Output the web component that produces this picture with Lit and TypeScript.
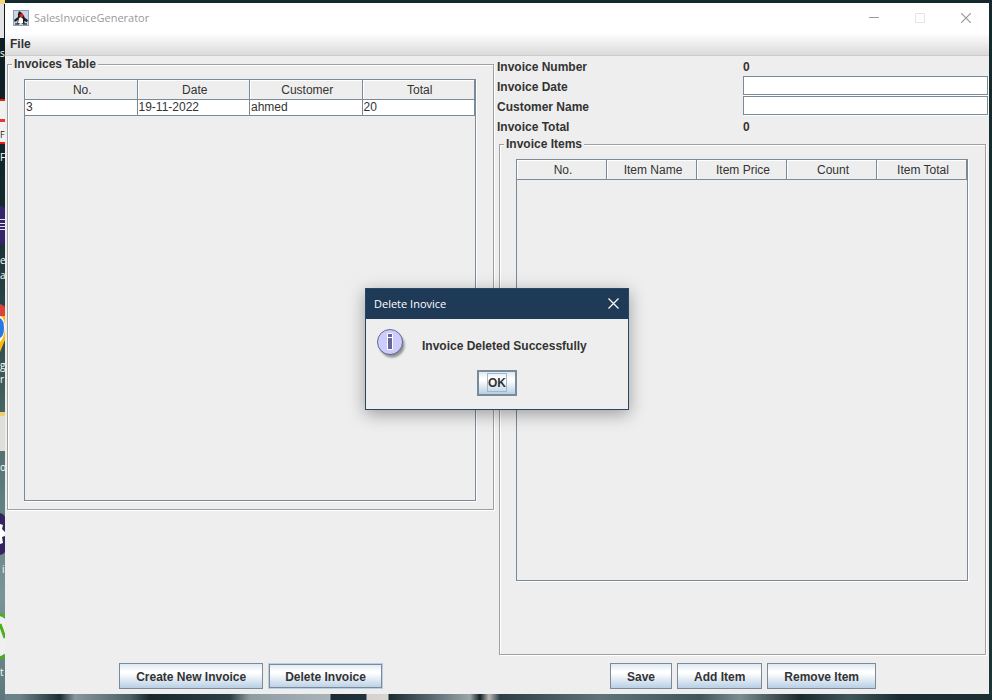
import { LitElement, html, css } from "lit";
import { customElement, property } from "lit/decorators.js";

@customElement("data-grid")
class DataGrid extends LitElement {
  @property({ attribute: false }) columns: string[] = [];
  @property({ attribute: false }) rows: string[][] = [];

  static styles = css`
    :host {
      display: block;
      box-sizing: border-box;
      height: 422px;
      border: 1px solid #7a8a99;
      box-shadow: 1px 1px 0 #fff;
    }
    .table {
      width: 100%;
      table-layout: fixed;
      border-collapse: separate;
      border-spacing: 0;
      font-size: 12px;
      font-weight: 400;
      color: #333;
    }
    th,
    td {
      box-sizing: border-box;
      padding: 0;
      border-right: 1px solid #7a8a99;
      border-bottom: 1px solid #7a8a99;
      overflow: hidden;
      white-space: nowrap;
    }
    th {
      height: 20px;
      padding: 2px 0 0 3px;
      line-height: 17px;
      font-weight: 400;
      text-align: center;
      background: #eee;
      box-shadow: inset 1px 1px 0 #fff;
    }
    td {
      height: 16px;
      padding-left: 1px;
      line-height: 15px;
      text-align: left;
      background: #fff;
    }
  `;

  render() {
    return html`
      <table class="table">
        <thead>
          <tr>${this.columns.map((c) => html`<th scope="col">${c}</th>`)}</tr>
        </thead>
        <tbody>
          ${this.rows.map((r) => html`<tr>${r.map((v) => html`<td>${v}</td>`)}</tr>`)}
        </tbody>
      </table>
    `;
  }
}

@customElement("app-root")
class AppRoot extends LitElement {
  static styles = css`
    :host {
      display: block;
      font: bold 12px/16px "Liberation Sans", Arial, sans-serif;
      color: #333;
    }
    * {
      box-sizing: border-box;
    }
    .desktop {
      position: relative;
      display: flex;
      min-height: 100vh;
      padding: 3px 3px 6px 5px;
      overflow: hidden;
      background:
        linear-gradient(90deg, #6a8288 0 20px, #1d2f33 60px, #87979b 75px, #4d6166 130px, #18282d 150px,
          #2c4046 230px, #8e9ca1 250px, #aab3b8 330px, #1b2b31 331px, #22333a 366px, #d5d2cd 367px,
          #d9d6d2 388px, #1b2b30 389px, #56676d 430px, #9ba5a8 470px, #132226 480px, #b9b9b5 489px,
          #2d3f45 500px, #5f7378 600px, #41555b 700px, #7c8d92 740px, #1a2a2e 800px, #41565b 850px,
          #1a2c2f 900px, #1c3033 100%) bottom / 100% 6px no-repeat,
        linear-gradient(#14292b, #1c3437);
    }
    .shortcuts {
      position: absolute;
      left: 0;
      top: 0;
      width: 5px;
      height: 700px;
    }
    .window {
      position: relative;
      flex: 1;
      display: flex;
      flex-direction: column;
      background: #eee;
    }
    .titlebar {
      display: flex;
      align-items: center;
      height: 30px;
      padding-left: 8px;
      background: #fff;
    }
    .logo {
      width: 16px;
      height: 16px;
      margin-right: 5px;
    }
    .title {
      flex: 1;
      margin: 0;
      font: 400 11px/16px "Open Sans", "Noto Sans", sans-serif;
      color: #999;
    }
    .control {
      display: grid;
      place-items: center;
      width: 46px;
      height: 30px;
      padding: 0;
      border: 0;
      background: none;
      color: #999;
    }
    .control[disabled] {
      color: #e3e3e3;
    }
    .menubar {
      display: flex;
      height: 23px;
      border-bottom: 1px solid #ccc;
      background: linear-gradient(#fff, #dadada);
    }
    .menu {
      padding: 0 5px;
      border: 0;
      background: none;
      font: inherit;
      color: inherit;
    }
    .content {
      flex: 1;
      display: grid;
      grid-template-columns: 1fr 1fr;
    }
    .side {
      display: flex;
      flex-direction: column;
      min-width: 0;
    }
    .group {
      min-width: 0;
      margin: 0 3px 0 2px;
      padding: 7px 17px 8px 16px;
      border: 1px solid #a0a0a0;
      box-shadow: 1px 1px 0 #fff, inset 1px 1px 0 #fff;
    }
    .group.items {
      flex: 1;
    }
    .legend {
      margin-left: -12px;
      padding: 1px 2px 0;
      line-height: 15px;
      background: #eee;
    }
    .fields {
      display: grid;
      grid-template-columns: 1fr 1fr;
      grid-auto-rows: 20px;
      line-height: 22px;
    }
    .field {
      width: calc(100% - 1px);
      height: 19px;
      padding: 0 2px;
      border: 1px solid #7a8a99;
      border-radius: 0;
      outline: 0;
      background: #fff;
      box-shadow: 1px 1px 0 #fff;
      font: 400 12px "Liberation Sans", Arial, sans-serif;
      color: #333;
    }
    .actions {
      display: flex;
      justify-content: center;
      gap: 5px;
      margin-top: auto;
      padding: 8px 0 5px;
    }
    .button {
      height: 26px;
      padding: 2px 16px 0;
      border: 1px solid #7a8a99;
      border-radius: 0;
      outline: 0;
      background: linear-gradient(#dde8f3, #fff 30%, #fff 38%, #b8cfe5);
      font: inherit;
      color: #333;
      white-space: nowrap;
    }
    .button.hot {
      border-color: #b8cfe5;
      box-shadow: inset 0 0 0 1px #7a8a99;
    }
    .button.focused {
      padding: 0 8px;
      border-width: 2px;
    }
    .focus {
      display: block;
      padding-top: 1px;
      border: 1px solid #a3b8cc;
      line-height: 16px;
    }
    .overlay {
      position: absolute;
      inset: 0;
      display: grid;
      place-items: center;
    }
    .dialog {
      position: static;
      width: 264px;
      margin: 0;
      padding: 0;
      border: 1px solid #274766;
      background: #eee;
      color: inherit;
      box-shadow: 0 4px 16px rgba(0, 0, 0, 0.35);
    }
    .dialog-head {
      display: flex;
      align-items: center;
      height: 30px;
      padding-left: 8px;
      background: #1f3a57;
    }
    .dialog-head .title,
    .dialog-head .control {
      color: #fff;
    }
    .dialog-head .control {
      width: 30px;
    }
    .message {
      display: flex;
      gap: 14px;
      padding: 9px 10px 0;
    }
    .message p {
      margin: 0;
      padding-top: 10px;
    }
    .dialog-actions {
      display: flex;
      justify-content: center;
      padding: 10px 0 13px;
    }
  `;

  render() {
    return html`
      <div class="desktop">
        ${this.renderShortcuts()}
        <main class="window">
          <header class="titlebar">
            ${this.renderLogo()}
            <h1 class="title">SalesInvoiceGenerator</h1>
            <button class="control" aria-label="Minimize">
              <svg width="10" height="10"><path d="M0 4.500H10" stroke="currentColor" /></svg>
            </button>
            <button class="control" aria-label="Maximize" disabled>
              <svg width="10" height="10"><path d="M.5 .5H9.5V9.5H.5Z" fill="none" stroke="currentColor" /></svg>
            </button>
            <button class="control" aria-label="Close">
              <svg width="10" height="10"><path d="M0 0L10 10M10 0L0 10" stroke="currentColor" stroke-width="1.200" /></svg>
            </button>
          </header>
          <nav class="menubar"><button class="menu">File</button></nav>
          <div class="content">
            <section class="side">
              <fieldset class="group">
                <legend class="legend">Invoices Table</legend>
                <data-grid
                  .columns=${["No.", "Date", "Customer", "Total"]}
                  .rows=${[["3", "19-11-2022", "ahmed", "20"]]}
                ></data-grid>
              </fieldset>
              <div class="actions">
                <button class="button">Create New Invoice</button>
                <button class="button hot">Delete Invoice</button>
              </div>
            </section>
            <section class="side">
              <div class="fields">
                <span>Invoice Number</span><output>0</output>
                <label for="date">Invoice Date</label><input id="date" class="field" type="text" />
                <label for="customer">Customer Name</label><input id="customer" class="field" type="text" />
                <span>Invoice Total</span><output>0</output>
              </div>
              <fieldset class="group items">
                <legend class="legend">Invoice Items</legend>
                <data-grid .columns=${["No.", "Item Name", "Item Price", "Count", "Item Total"]}></data-grid>
              </fieldset>
              <div class="actions">
                <button class="button">Save</button>
                <button class="button">Add Item</button>
                <button class="button">Remove Item</button>
              </div>
            </section>
          </div>
          <div class="overlay">
            <dialog class="dialog" open aria-labelledby="dialog-title">
              <header class="dialog-head">
                <h2 id="dialog-title" class="title">Delete Inovice</h2>
                <button class="control" aria-label="Close">
                  <svg width="11" height="11">
                    <path d="M.5 .5L10.5 10.5M10.5 .5L.5 10.5" stroke="currentColor" stroke-width="1.2" />
                  </svg>
                </button>
              </header>
              <div class="message">
                ${this.renderInfoIcon()}
                <p>Invoice Deleted Successfully</p>
              </div>
              <div class="dialog-actions">
                <button class="button focused"><span class="focus">OK</span></button>
              </div>
            </dialog>
          </div>
        </main>
      </div>
    `;
  }

  private renderLogo() {
    return html`
      <svg class="logo" viewBox="0 0 16 16" aria-hidden="true">
        <rect width="16" height="16" fill="#8c9fb4" />
        <rect x="1" y="1" width="14" height="14" fill="#c9d5e2" />
        <path d="M6 1L9 3L11 6L12 8L15 10L14 12L11 11L12 14H4L5 10L2 12L1 10L5 7L5 4Z" fill="#1c1c20" />
        <path d="M6 8L8 7L10 9L10 13L8 14L5 13Z" fill="#fff" />
        <circle cx="8.500" cy="5.500" r="2" fill="#e0201c" />
        <path d="M2 14H6M10 14H14" stroke="#444" stroke-width="1.500" />
      </svg>
    `;
  }

  private renderInfoIcon() {
    return html`
      <svg width="32" height="32" viewBox="0 0 32 32" aria-hidden="true">
        <defs>
          <filter id="soft" x="-20%" y="-20%" width="140%" height="140%"><feGaussianBlur stdDeviation="1.200" /></filter>
        </defs>
        <circle cx="16" cy="17" r="12.500" fill="#000" opacity=".4" filter="url(#soft)" />
        <circle cx="14" cy="14" r="12.500" fill="#ccf" stroke="#669" />
        <path d="M11.500 5.500H16.500V9.500H11.500ZM11.500 9.500H16.500V21.500H11.500Z" fill="#669" stroke="#fff" />
      </svg>
    `;
  }

  /** Edges of the desktop shortcuts that show beside the window. */
  private renderShortcuts() {
    return html`
      <svg class="shortcuts" viewBox="0 0 5 700" aria-hidden="true" font-family="Open Sans, sans-serif" font-size="10" font-weight="400">
        <defs>
          <linearGradient id="wall" x2="0" y2="1">
            <stop offset="0" stop-color="#0c1a1e" />
            <stop offset=".3" stop-color="#142a2d" />
            <stop offset=".5" stop-color="#35504f" />
            <stop offset=".7" stop-color="#5d7d7c" />
            <stop offset=".85" stop-color="#7b9497" />
            <stop offset="1" stop-color="#5d787d" />
          </linearGradient>
        </defs>
        <rect width="5" height="700" fill="url(#wall)" />
        <rect width="5" height="4" fill="#f5d67c" />
        <rect y="4" width="4" height="34" fill="#e4e4e4" />
        <rect y="99" width="5" height="45" fill="#ee1c10" />
        <rect y="101" width="5" height="41" fill="#f2f2f2" />
        <rect y="119" width="5" height="3" fill="#e33" />
        <path d="M0 206Q4 206 5 209V242Q4 245 0 245Z" fill="#35256a" />
        <path d="M0 219.500H5M0 223.500H5M0 226.500H5M0 229.500H5" stroke="#e6e4ee" />
        <path d="M0 304Q3 305 5 307V316H0Z" fill="#dc4437" />
        <path d="M0 316H5V340L0 352Z" fill="#fbbc0d" />
        <path d="M0 316Q5 318 5 328Q4 338 0 342Z" fill="#fff" />
        <path d="M0 318Q4 320 4 328Q4 336 0 338Z" fill="#2b78e4" />
        <rect y="412" width="5" height="4" fill="#f0cf74" />
        <rect y="416" width="5" height="35" fill="#e0dedb" />
        <path d="M0 513Q4 514 5 517V552Q3 555 0 555Z" fill="#35245f" />
        <path d="M0 524L3 525L2 529L5 532V536L2 537L3 543L0 544Z" fill="#fff" />
        <path d="M0 616Q3 616 5 619V654Q3 656 0 656Z" fill="#f0f0f0" />
        <path d="M0 614.500Q3 615 5 617M0 624L5 638M0 658Q3 657 5 655" fill="none" stroke="#4caf1c" stroke-width="3" />
        <text x="0" y="57" fill="#fff">s</text>
        <text x="0" y="138" fill="#222" font-size="9">F</text>
        <text x="0" y="161" fill="#fff">F</text>
        <text x="0" y="264" fill="#fff">e</text>
        <text x="0" y="279" fill="#fff">a</text>
        <text x="0" y="369" fill="#fff">g</text>
        <text x="0" y="383" fill="#fff">r</text>
        <text x="0" y="471" fill="#fff">o</text>
        <text x="2" y="573" fill="#fff">i</text>
        <text x="0" y="676" fill="#fff">t</text>
      </svg>
    `;
  }
}
